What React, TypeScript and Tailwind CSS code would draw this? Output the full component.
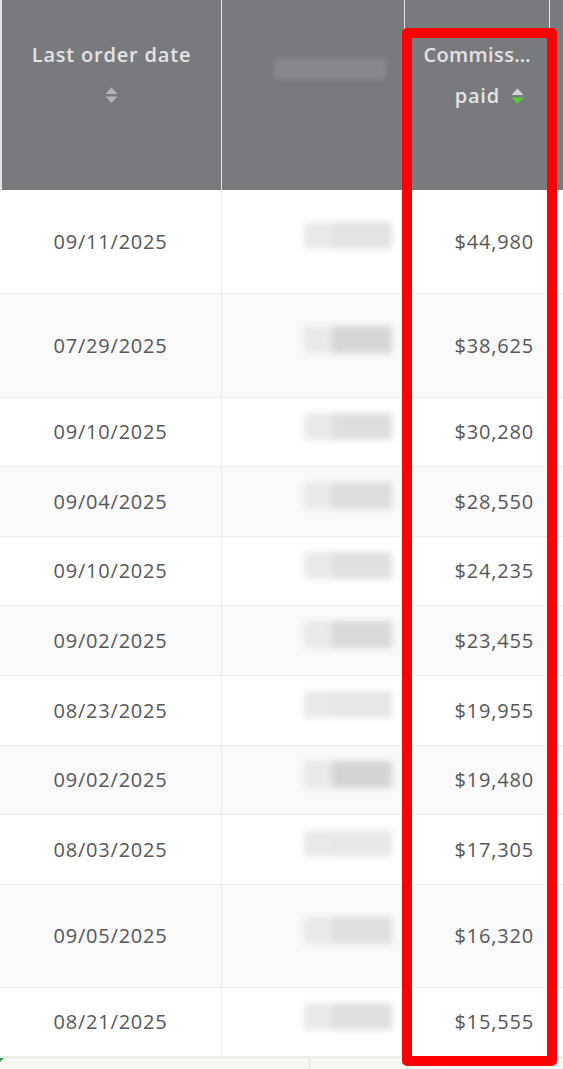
import React from 'react';

const rows = [
  { date: '09/11/2025', amount: '$44,980', h: 'h-[104px]', shade: 'bg-[#e3e3e3]' },
  { date: '07/29/2025', amount: '$38,625', h: 'h-[104px]', shade: 'bg-[#d6d6d6]' },
  { date: '09/10/2025', amount: '$30,280', h: 'h-[69px]', shade: 'bg-[#dedede]' },
  { date: '09/04/2025', amount: '$28,550', h: 'h-[70px]', shade: 'bg-[#dcdcdc]' },
  { date: '09/10/2025', amount: '$24,235', h: 'h-[69px]', shade: 'bg-[#e0e0e0]' },
  { date: '09/02/2025', amount: '$23,455', h: 'h-[70px]', shade: 'bg-[#d9d9d9]' },
  { date: '08/23/2025', amount: '$19,955', h: 'h-[70px]', shade: 'bg-[#e6e6e6]' },
  { date: '09/02/2025', amount: '$19,480', h: 'h-[69px]', shade: 'bg-[#d4d4d4]' },
  { date: '08/03/2025', amount: '$17,305', h: 'h-[70px]', shade: 'bg-[#e8e8e8]' },
  { date: '09/05/2025', amount: '$16,320', h: 'h-[103px]', shade: 'bg-[#dfdfdf]' },
  { date: '08/21/2025', amount: '$15,555', h: 'h-[69px]', shade: 'bg-[#e0e0e0]' },
];

function SortIcon({ active }: { active?: boolean }) {
  return (
    <svg width="13" height="17" viewBox="0 0 13 17">
      <path d="M6.5 0.5 L12.5 7 L0.5 7 Z" fill={active ? '#d4d4d6' : '#b4b5b8'} />
      <path d="M0.5 9.5 L12.5 9.5 L6.5 16 Z" fill={active ? '#5bc83c' : '#b4b5b8'} />
    </svg>
  );
}

export default function App() {
  return (
    <div className="relative w-[563px] h-[1069px] overflow-hidden bg-white font-['Open_Sans','Liberation_Sans',sans-serif] tracking-[0.8px]">
      {/* header */}
      <div className="grid grid-cols-[221px_183px_145px_14px] h-[190px] bg-[#797a7e] text-[#e4e4e4] text-[20px] font-semibold">
        <div className="border-l-2 border-white/80 flex flex-col items-center pt-[40px]">
          <span className="leading-[30px]">Last order date</span>
          <div className="mt-[17px]"><SortIcon /></div>
        </div>
        <div className="border-l border-white/80 flex pl-[52px] pt-[58px]">
          <div className="w-[112px] h-[21px] bg-[#87888c] blur-[2px]" />
        </div>
        <div className="border-l border-white/80 flex flex-col items-end pr-[18px] pl-[10px] pt-[40px]">
          <span className="leading-[30px] whitespace-nowrap tracking-[0.4px]">Commiss…</span>
          <div className="flex items-center gap-[11px] mt-[11px] mr-[7px]">
            <span className="leading-[30px]">paid</span>
            <SortIcon active />
          </div>
        </div>
        <div className="border-l border-white/80" />
      </div>

      {/* body */}
      {rows.map((r, i) => (
        <div
          key={i}
          className={`grid grid-cols-[221px_183px_145px_14px] ${r.h} border-b border-[#ececec] text-[20px] text-[#575757] ${i % 2 === 1 ? 'bg-[#f9f9f9]' : 'bg-white'}`}
        >
          <div className="flex items-center justify-center">{r.date}</div>
          <div className="border-l border-[#ececec] flex items-center justify-end pr-[12px]">
            <div className={`w-[88px] h-[27px] ${r.shade} blur-[3px] mb-[12px] flex`}>
              <div className="w-[28px] bg-[#e9e9e9]" />
            </div>
          </div>
          <div className="border-l border-[#ececec] flex items-center justify-end pr-[15px]">{r.amount}</div>
          <div className="border-l border-[#ececec]" />
        </div>
      ))}

      {/* footer strip */}
      <div className="relative h-[12px] bg-[#f7f8f4] border-t border-[#e6eae2] flex">
        <div className="w-[310px] border-r border-[#e2e4e0]" />
        <div className="absolute left-0 top-0 w-0 h-0 border-t-[4px] border-r-[4px] border-t-[#3f9a4a] border-r-transparent" />
      </div>

      {/* highlight annotation */}
      <div className="absolute left-[402px] top-[28px] w-[155px] h-[1038px] border-[10px] border-[#ff0000] rounded-[5px] pointer-events-none" />
    </div>
  );
}
